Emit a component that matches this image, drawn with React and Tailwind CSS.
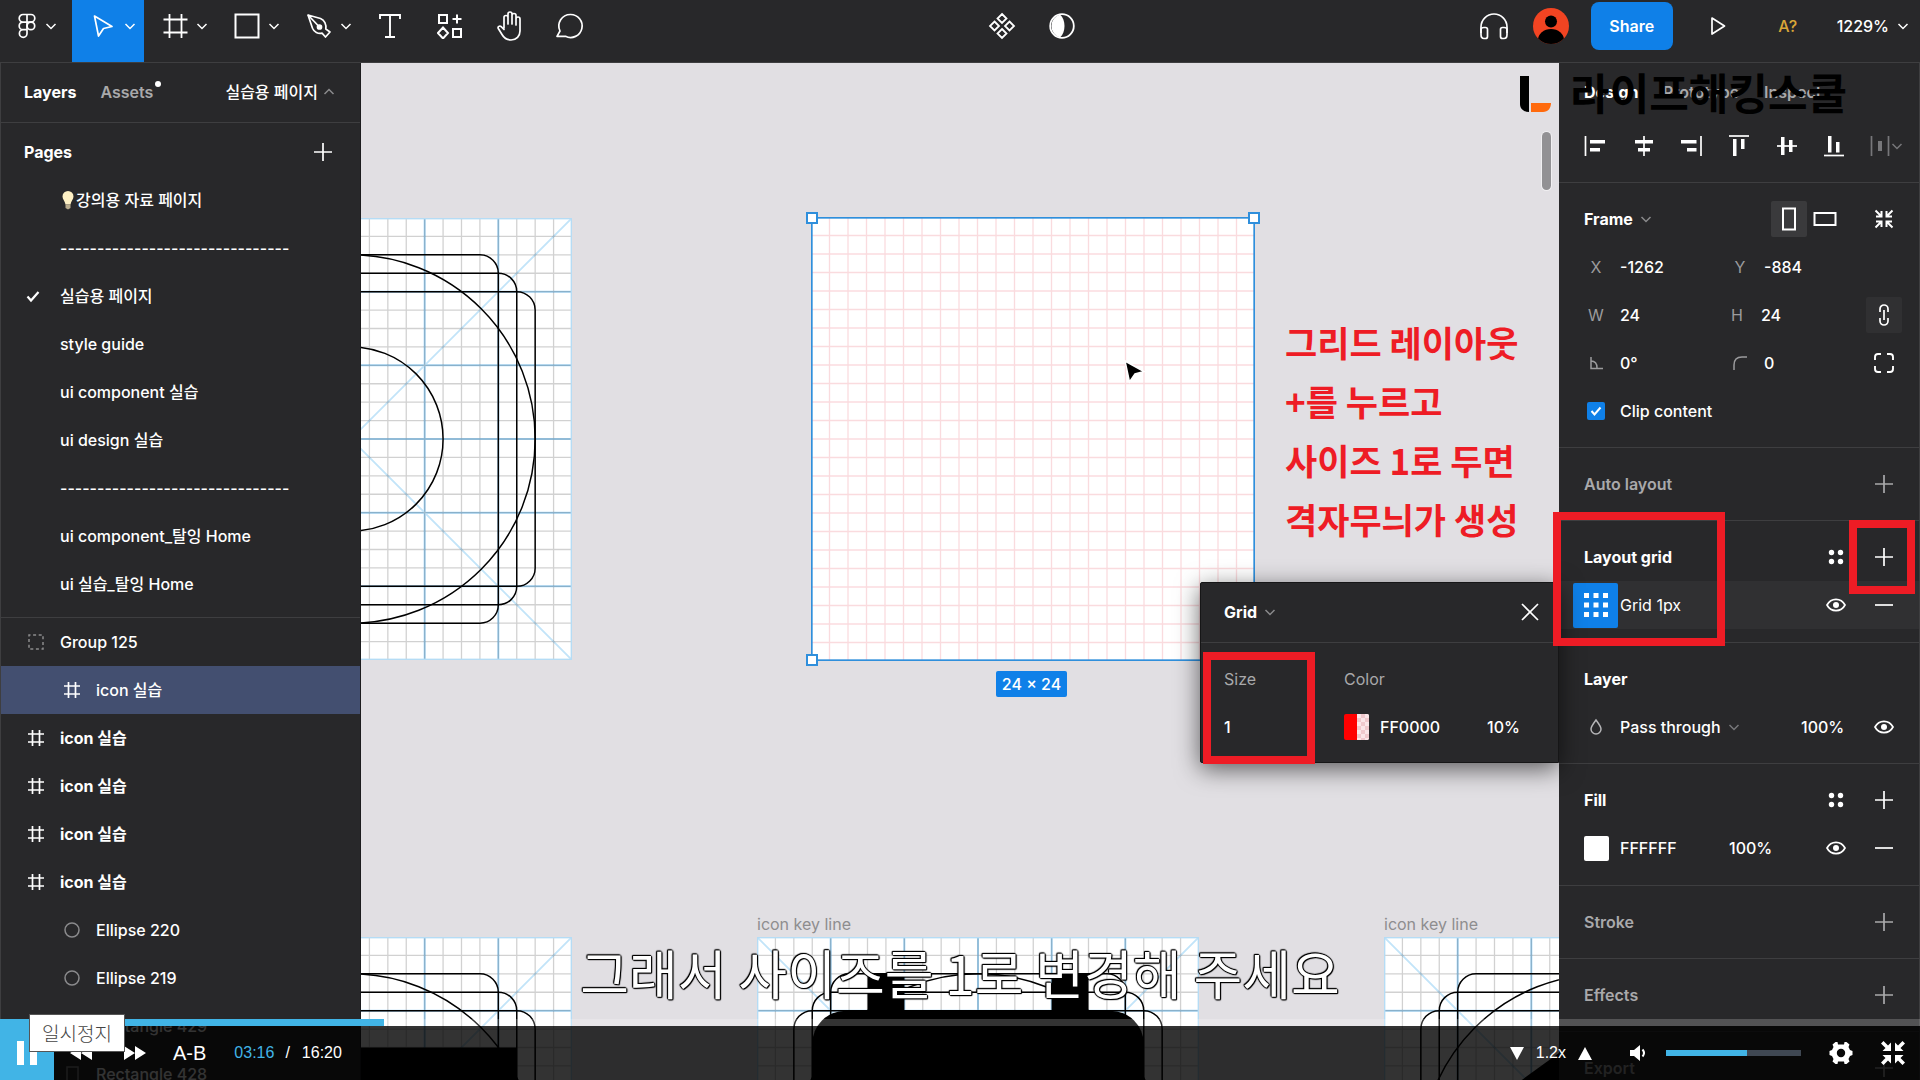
import React, { useState } from 'react';

const FONT = "font-['Inter','Noto_Sans_CJK_KR',sans-serif]";

/* ---------- icons ---------- */

const Chevron = ({ className = 'text-white', up = false }) => (
  <svg className={`w-[14px] h-[14px] shrink-0 ${className}`} viewBox="0 0 14 14" fill="none" stroke="currentColor" strokeWidth="1.5">
    <path d={up ? 'M2.500 9L7 4.500L11.500 9' : 'M2.500 5L7 9.500L11.500 5'} />
  </svg>
);

const Svg = ({ w = 26, h = 26, sw = 1.7, className = '', children }) => (
  <svg width={w} height={h} viewBox={`0 0 ${w} ${h}`} fill="none" stroke="currentColor" strokeWidth={sw} className={`shrink-0 ${className}`}>
    {children}
  </svg>
);

const FigmaIcon = () => (
  <Svg w={18} h={26}>
    <path d="M9 1.500H5a3.800 3.800 0 0 0 0 7.600h4zM9 1.500h4a3.800 3.800 0 0 1 0 7.600H9zM9 9.100H5a3.800 3.800 0 0 0 0 7.600h4zM9 16.700H5a3.800 3.800 0 1 0 4 3.800z" />
    <circle cx="12.900" cy="12.900" r="3.800" />
  </Svg>
);

const CursorIcon = () => (
  <Svg><path d="M4.500 3L22 13.500L13.500 15.500L8.500 23z" strokeLinejoin="round" /></Svg>
);

const FrameIcon = () => (
  <Svg sw={1.800}><path d="M7.500 1v24M19.500 1v24M1.500 6.500h24M1.500 19.500h24" /></Svg>
);

const RectIcon = () => (
  <Svg sw={2}><rect x="1.500" y="1.500" width="23" height="23" /></Svg>
);

const PenIcon = () => (
  <Svg>
    <path d="M2 2l12.500 3.500c4 1.500 6 6 5.300 10.500l4.200 3-4.500 5-3.500-3.800c-4 .8-8-1.200-9.500-5z" strokeLinejoin="round" />
    <path d="M2 2l11 11.500" />
    <circle cx="13.500" cy="14" r="2" fill="currentColor" />
  </Svg>
);

const TextIcon = () => (
  <Svg sw={1.900}><path d="M3 6V2h20v4M13 2v22M8 24h10" /></Svg>
);

const WidgetIcon = () => (
  <Svg sw={2}>
    <path d="M2 2h8v8H2zM16 16h8v8h-8zM20 1.500v9M15.500 6h9M6 14.500l5 5.500-5 5.500L1 20z" />
  </Svg>
);

const HandIcon = () => (
  <Svg w={30} h={32}>
    <path d="M9 18V7.500a2 2 0 0 1 4 0V14M13 14V4a2 2 0 0 1 4 0v10M17 14V5.500a2 2 0 0 1 4 0V15M21 15V9a2 2 0 0 1 4 0v12c0 5-3.500 9-9 9-4.500 0-7-2-9-5.500L3.300 18.500c-.9-1.800 1.400-3.300 2.900-1.800L9 19.500" strokeLinecap="round" />
  </Svg>
);

const CommentIcon = () => (
  <Svg w={28} h={28}><path d="M14.500 2.500a11.500 11.500 0 1 1-5 21.800H1l3-5.300A11.500 11.500 0 0 1 14.500 2.500z" strokeLinejoin="round" /></Svg>
);

const ComponentIcon = () => (
  <Svg w={28} h={28} sw={1.800}>
    <path d="M14 2l4.500 4.500L14 11 9.500 6.500zM14 17l4.500 4.500L14 26l-4.500-4.500zM6.500 9.500L11 14l-4.500 4.500L2 14zM21.500 9.500L26 14l-4.500 4.500L17 14z" />
  </Svg>
);

const MaskIcon = () => (
  <Svg w={28} h={28} sw={1.800}>
    <circle cx="14" cy="14" r="11.800" />
    <path d="M12 2.500c6 5 6 18 0 23a12 12 0 0 1 0-23z" fill="currentColor" stroke="none" />
  </Svg>
);

const HeadphonesIcon = () => (
  <Svg w={30} h={28}>
    <path d="M2 21V15a13 13 0 0 1 26 0v6" />
    <path d="M2 17.500q0-2 3-2h1.500q2 0 2 2v7q0 2-2 2H5q-3 0-3-4zM28 17.500q0-2-3-2h-1.500q-2 0-2 2v7q0 2 2 2H25q3 0 3-4z" />
  </Svg>
);

const HashIcon = () => (
  <Svg w={18} h={18} sw={1.700}><path d="M5.500 1v16M12.500 1v16M1 5h16M1 13h16" /></Svg>
);

const EllipseIcon = () => (
  <Svg w={18} h={18} sw={1.500} className="text-[#8a8a8c]"><circle cx="9" cy="9" r="7" /></Svg>
);

const GroupIcon = () => (
  <Svg w={18} h={18} sw={1.500} className="text-[#8a8a8c]"><rect x="2" y="2" width="14" height="14" strokeDasharray="3 2.600" strokeDashoffset="1.500" /></Svg>
);

const RectLayerIcon = () => (
  <Svg w={18} h={18} sw={1.500} className="text-[#8a8a8c]"><rect x="4" y="2" width="11" height="14" /></Svg>
);

const PlusIcon = () => (
  <Svg w={18} h={18} sw={1.700}><path d="M9 0v18M0 9h18" /></Svg>
);

const MinusIcon = () => (
  <Svg w={18} h={18} sw={1.700}><path d="M0 9h18" /></Svg>
);

const DotsIcon = () => (
  <svg width="18" height="18" viewBox="0 0 18 18" fill="currentColor" className="shrink-0">
    <circle cx="4.500" cy="4.500" r="2.700" /><circle cx="13.500" cy="4.500" r="2.700" />
    <circle cx="4.500" cy="13.500" r="2.700" /><circle cx="13.500" cy="13.500" r="2.700" />
  </svg>
);

const EyeIcon = () => (
  <Svg w={20} h={18}>
    <path d="M1 9c4-7.500 14-7.500 18 0-4 7.500-14 7.500-18 0z" />
    <circle cx="10" cy="9" r="3" fill="currentColor" stroke="none" />
  </Svg>
);

const ALIGN_ICONS = [
  { label: 'Align left', d: 'M1.500 2v20', bars: 'M6 6h15v3.500H6zM6 14h10v3.500H6z' },
  { label: 'Align horizontal centers', d: 'M12 2v20', bars: 'M3 6h18v3.500H3zM6 14h12v3.500H6z' },
  { label: 'Align right', d: 'M22 2v20', bars: 'M2 6h15.500v3.500H2zM8 14h9.500v3.500H8z' },
  { label: 'Align top', d: 'M2 2h20', bars: 'M6 5h3.500v17H6zM14 5h3.500v10H14z' },
  { label: 'Align vertical centers', d: 'M2 12h20', bars: 'M6 3h3.500v18H6zM14 6h3.500v12H14z' },
  { label: 'Align bottom', d: 'M2 21.500h20', bars: 'M6 2h3.500v16.500H6zM14 8h3.500v10.500H14z' },
];

/* ---------- toolbar ---------- */

const TOOLS = [
  { label: 'Move', icon: CursorIcon, menu: true, active: true },
  { label: 'Frame', icon: FrameIcon, menu: true },
  { label: 'Rectangle', icon: RectIcon, menu: true },
  { label: 'Pen', icon: PenIcon, menu: true },
  { label: 'Text', icon: TextIcon },
  { label: 'Resources', icon: WidgetIcon },
  { label: 'Hand', icon: HandIcon },
  { label: 'Comment', icon: CommentIcon },
];

const Toolbar = () => (
  <header className="flex h-[63px] shrink-0 border-b border-[#3e3e40] text-white">
    <button aria-label="Main menu" className="flex items-center gap-2 w-[72px] pl-[18px] pb-[10px]">
      <FigmaIcon />
      <Chevron />
    </button>
    {TOOLS.map(({ label, icon: Icon, menu, active }) => (
      <button
        key={label}
        aria-label={label}
        className={`flex items-center pb-[10px] ${menu ? 'w-[72px] pl-[18px] gap-[7px]' : 'w-[60px] justify-center'} ${active ? 'bg-[#0f80e8]' : ''}`}
      >
        <Icon />
        {menu && <Chevron />}
      </button>
    ))}
    <div className="flex flex-1 justify-center">
      <button aria-label="Component" className="flex items-center justify-center w-[60px] pb-[10px]"><ComponentIcon /></button>
      <button aria-label="Mask" className="flex items-center justify-center w-[60px] pb-[10px]"><MaskIcon /></button>
    </div>
    <div className="flex items-center pb-[10px]">
      <button aria-label="Audio" className="flex justify-center w-[60px]"><HeadphonesIcon /></button>
      <svg className="w-9 h-9 ml-[9px]" viewBox="0 0 36 36">
        <clipPath id="avatar"><circle cx="18" cy="18" r="18" /></clipPath>
        <g clipPath="url(#avatar)">
          <rect width="36" height="36" fill="#f24422" />
          <circle cx="18" cy="13.500" r="6" />
          <ellipse cx="18" cy="32" rx="13" ry="11" />
        </g>
      </svg>
      <button className="w-[82px] h-12 ml-[22px] rounded-lg bg-[#0f80e8] font-semibold">Share</button>
      <button aria-label="Present" className="flex justify-center w-[60px] ml-[15px]">
        <Svg w={18} h={20}><path d="M3 2l12.500 8L3 18z" strokeLinejoin="round" /></Svg>
      </button>
      <button className="w-[60px] ml-[10px] font-medium text-[#d9a638]">A?</button>
      <button className="flex items-center gap-[7px] pl-[19px] pr-[10px] font-medium">1229% <Chevron /></button>
    </div>
  </header>
);

/* ---------- left panel ---------- */

const PAGES = [
  '강의용 자료 페이지',
  '-------------------------------',
  '실습용 페이지',
  'style guide',
  'ui component 실습',
  'ui design 실습',
  '-------------------------------',
  'ui component_탈잉 Home',
  'ui 실습_탈잉 Home',
];

const LAYERS = [
  { name: 'Group 125', icon: GroupIcon },
  { name: 'icon 실습', icon: HashIcon, nested: true, selected: true },
  { name: 'icon 실습', icon: HashIcon, bold: true },
  { name: 'icon 실습', icon: HashIcon, bold: true },
  { name: 'icon 실습', icon: HashIcon, bold: true },
  { name: 'icon 실습', icon: HashIcon, bold: true },
  { name: 'Ellipse 220', icon: EllipseIcon, nested: true },
  { name: 'Ellipse 219', icon: EllipseIcon, nested: true },
  { name: 'Rectangle 429', icon: RectLayerIcon, nested: true },
  { name: 'Rectangle 428', icon: RectLayerIcon, nested: true },
];

const BulbIcon = () => (
  <svg width="16" height="20" viewBox="0 0 16 20" className="shrink-0">
    <path d="M8 1a5.500 5.500 0 0 1 5.500 5.500c0 3-2.500 4.500-3 8h-5c-.5-3.500-3-5-3-8A5.500 5.500 0 0 1 8 1z" fill="#fdf0c4" />
    <path d="M5.500 14.500h5V18L8 19.500 5.500 18z" fill="#b9ac8d" />
  </svg>
);

const LeftPanel = () => (
  <aside className="w-[361px] shrink-0 border-l border-r border-l-[#3e3e40] border-r-[#1c1c1e] text-white">
    <div className="flex items-center h-[60px] pl-[23px] pr-6 pb-[2px] border-b border-[#3e3e40]">
      <button className="font-bold">Layers</button>
      <button className="flex ml-6 font-semibold text-[#a9a9ab]">
        Assets
        <span className="w-[6px] h-[6px] mt-px ml-[2px] rounded-full bg-white" />
      </button>
      <button className="flex items-center gap-1 ml-auto font-medium">
        실습용 페이지 <Chevron up className="text-[#8a8a8c]" />
      </button>
    </div>
    <section className="pt-[5px] pb-[9px] border-b border-[#3e3e40] font-medium">
      <div className="flex items-center justify-between h-12 pl-[23px] pr-7">
        <h2 className="font-bold">Pages</h2>
        <button aria-label="Add page"><PlusIcon /></button>
      </div>
      <ul>
        {PAGES.map((page, i) => (
          <li key={i} className="flex items-center h-12 whitespace-nowrap">
            <span className="flex justify-center w-[59px] pl-1 shrink-0">
              {i === 2 && <Svg w={14} h={14} sw={2.200}><path d="M1.500 7.500l3.500 4L12.500 3" /></Svg>}
            </span>
            {i === 0 && <BulbIcon />}
            {page}
          </li>
        ))}
      </ul>
    </section>
    <ul className="font-medium">
      {LAYERS.map(({ name, icon: Icon, nested, selected, bold }, i) => (
        <li
          key={i}
          className={`flex items-center gap-[15px] h-12 whitespace-nowrap ${nested ? 'pl-[62px]' : 'pl-[26px]'} ${selected ? 'bg-[#434f70]' : ''} ${bold ? 'font-bold' : ''}`}
        >
          <Icon />
          {name}
        </li>
      ))}
    </ul>
  </aside>
);

/* ---------- canvas ---------- */

const CELLS = Array.from({ length: 23 }, (_, i) => i + 1);
const LINES = CELLS.map((n) => `M${n} 0V24M0 ${n}H24`).join('');

const KeylineFrame = ({ className, children }) => (
  <svg className={`absolute w-[442px] h-[442px] ${className}`} viewBox="0 0 24 24" fill="none">
    <rect width="24" height="24" fill="#fff" />
    <path d="M4 0V24M8 0V24M12 0V24M16 0V24M20 0V24M0 4H24M0 8H24M0 12H24M0 16H24M0 20H24" stroke="#a8d8f8" strokeWidth=".11" />
    <path d="M0 0L24 24M24 0L0 24" stroke="#c2e4f9" strokeWidth=".1" />
    <path d={LINES} stroke="#000" strokeOpacity=".18" strokeWidth=".07" />
    <rect width="24" height="24" stroke="#b5dcf5" strokeWidth=".15" />
    <g stroke="#000" strokeWidth=".08">
      <circle cx="12" cy="12" r="10" />
      <circle cx="12" cy="12" r="5" />
      <rect x="4" y="2" width="16" height="20" rx="1" />
      <rect x="3" y="3" width="18" height="18" rx="1" />
      <rect x="2" y="4" width="20" height="16" rx="1" />
    </g>
    {children}
  </svg>
);

const Handle = ({ className }) => (
  <span className={`absolute w-3 h-3 border-2 border-[#2f8fdc] bg-white ${className}`} />
);

const Canvas = () => (
  <main className="relative flex-1 min-w-0 overflow-hidden bg-[#e1dfe3]">
    <KeylineFrame className="left-[-231px] top-[155px]" />
    <KeylineFrame className="left-[-231px] top-[874px]">
      <path d="M3 6H21V19H3z" fill="#000" />
    </KeylineFrame>
    <span className="absolute left-[396px] top-[849px] text-[#8e8d8f]">icon key line</span>
    <KeylineFrame className="left-[396px] top-[874px]">
      <rect x="3" y="4" width="18" height="17" rx="1.800" fill="#000" />
      <path d="M6 2h2v3H6zM16 2h2v3h-2z" fill="#000" />
    </KeylineFrame>
    <span className="absolute left-[1023px] top-[849px] text-[#8e8d8f]">icon key line</span>
    <KeylineFrame className="left-[1023px] top-[874px]">
      <path d="M12 4.500L21 11V21H3V11z" fill="#000" />
    </KeylineFrame>

    {/* selected frame with the 1px layout grid */}
    <div className="absolute left-[450px] top-[154px] w-[444px] h-[444px]">
      <svg className="w-full h-full" viewBox="0 0 24 24">
        <rect width="24" height="24" fill="#fff" />
        <path d={LINES} stroke="#e02030" strokeOpacity=".16" strokeWidth=".07" />
        <rect x=".04" y=".04" width="23.920" height="23.920" fill="none" stroke="#2f8fdc" strokeWidth=".1" />
      </svg>
      <Handle className="-left-[5px] -top-[5px]" />
      <Handle className="-right-[5px] -top-[5px]" />
      <Handle className="-left-[5px] -bottom-[5px]" />
      <Handle className="-right-[5px] -bottom-[5px]" />
      <span className="absolute left-[185px] top-[454px] w-[71px] h-[26px] rounded-xs bg-[#0f80e8] text-white font-medium text-center leading-[26px]">
        24 × 24
      </span>
    </div>

    <svg className="absolute left-[762px] top-[296px]" width="24" height="26" viewBox="0 0 24 26">
      <path d="M2 2L21 12.500 12 15 6.500 23z" fill="#000" stroke="#fff" strokeWidth="1.500" />
    </svg>

    <p className="absolute right-[38px] top-[249px] w-[236px] font-bold text-[35px] leading-[59px] text-[#ee1c25] whitespace-pre font-['Noto_Sans_CJK_KR',sans-serif]">
      {'그리드 레이아웃\n+를 누르고\n사이즈 1로 두면\n격자무늬가 생성'}
    </p>

    <span className="absolute right-2 top-[69px] w-[9px] h-[58px] rounded-full bg-[#929194] ring-1 ring-white/50" />
  </main>
);

/* ---------- right panel ---------- */

const Mark = ({ className }) => (
  <span className={`absolute border-8 border-[#ee1c25] pointer-events-none ${className}`} />
);

const Section = ({ className = 'pb-3', children }) => (
  <section className={`pt-3 border-b border-[#3e3e40] ${className}`}>{children}</section>
);

const Row = ({ className = '', children }) => (
  <div className={`flex items-center h-12 pl-[25px] pr-[26px] ${className}`}>{children}</div>
);

const EmptySection = ({ title }) => (
  <Section>
    <Row className="justify-between text-[#a9a9ab]">
      <h2 className="font-semibold">{title}</h2>
      <button aria-label={`Add ${title}`}><PlusIcon /></button>
    </Row>
  </Section>
);

const Field = ({ id, label, title, value }) => (
  <div className="flex items-center w-36">
    <label htmlFor={id} aria-label={title} className="flex justify-center w-6 mr-3 text-[#9b9b9d]">{label}</label>
    <input id={id} defaultValue={value} className="w-20 bg-transparent font-medium outline-none" />
  </div>
);

const GridPopover = () => (
  <div className="absolute right-full top-[61px] z-10 w-[359px] h-[181px] rounded-l-xs border border-[#161617] bg-[#28282a] shadow-[0_6px_24px_rgba(0,0,0,0.6)]">
    <div className="flex items-center h-[60px] pl-[23px] pr-[19px] pb-[2px] border-b border-[#3e3e40]">
      <button className="flex items-center gap-[6px] font-bold">Grid <Chevron className="text-[#8a8a8c]" /></button>
      <button aria-label="Close" className="ml-auto">
        <Svg w={18} h={18}><path d="M1 1l16 16M17 1L1 17" /></Svg>
      </button>
    </div>
    <div className="grid grid-cols-[120px_1fr] pt-3 pl-[23px] pr-5">
      <label htmlFor="grid-size" className="h-12 leading-[48px] text-[#a9a9ab]">Size</label>
      <label htmlFor="grid-color" className="h-12 leading-[48px] text-[#a9a9ab]">Color</label>
      <input id="grid-size" defaultValue="1" className="w-20 h-12 bg-transparent font-medium outline-none" />
      <div className="flex items-center h-12">
        <span className="flex w-[25px] h-[26px] mr-[11px] rounded-xs overflow-hidden">
          <span className="flex-1 bg-[#ff0000]" />
          <span className="flex-1 bg-[#fbe0e2] bg-[repeating-conic-gradient(#f0c9cd_0_25%,#fbe6e8_0_50%)] bg-[length:8px_8px]" />
        </span>
        <input id="grid-color" defaultValue="FF0000" className="w-[107px] bg-transparent font-medium outline-none" />
        <input aria-label="Grid opacity" defaultValue="10%" className="w-12 bg-transparent font-medium outline-none" />
      </div>
    </div>
    <Mark className="left-[2px] top-[69px] w-[112px] h-[112px]" />
  </div>
);

const RightPanel = () => {
  const [clip, setClip] = useState(true);

  return (
    <aside className="w-[361px] shrink-0 border-r border-[#3e3e40] text-white">
      <nav className="flex items-center h-[59px] pl-[25px] pb-[2px] font-semibold text-[#a9a9ab]">
        <button className="w-[79px] text-left font-bold text-white">Design</button>
        <button className="w-[101px] text-left">Prototype</button>
        <button>Inspect</button>
      </nav>
      <div className="flex items-center justify-between h-[61px] pl-[25px] pr-[15px] pb-3 border-b border-[#3e3e40]">
        {ALIGN_ICONS.map(({ label, d, bars }) => (
          <button key={label} aria-label={label}>
            <Svg w={24} h={24}><path d={d} /><path d={bars} fill="currentColor" stroke="none" /></Svg>
          </button>
        ))}
        <button aria-label="Distribute" className="flex items-center text-[#77777a]">
          <Svg w={20} h={24}><path d="M1.500 2v20M18.500 2v20" /><path d="M8 7h4v10H8z" fill="currentColor" stroke="none" /></Svg>
          <Chevron className="" />
        </button>
      </div>

      <Section>
        <Row>
          <button className="flex items-center gap-[6px] font-bold">Frame <Chevron className="text-[#8a8a8c]" /></button>
          <button aria-label="Portrait" className="flex items-center justify-center w-9 h-9 ml-auto rounded-xs bg-[#3a3a3c]">
            <Svg w={14} h={24} sw={2}><rect x="1" y="1.500" width="12" height="21" /></Svg>
          </button>
          <button aria-label="Landscape" className="flex justify-center w-9">
            <Svg w={24} h={14} sw={2}><rect x="1.500" y="1" width="21" height="12" /></Svg>
          </button>
          <button aria-label="Resize to fit" className="-mr-px ml-[31px]">
            <Svg w={20} h={20} sw={2}>
              <path d="M7.500 2v5.500H2M12.500 2v5.500H18M7.500 18v-5.500H2M12.500 18v-5.500H18M1.500 1.500l5.500 5.500M18.500 1.500l-5.500 5.500M1.500 18.500l5.500-5.500M18.500 18.500l-5.500-5.500" />
            </Svg>
          </button>
        </Row>
        <Row>
          <Field id="x" label="X" value="-1262" />
          <Field id="y" label="Y" value="-884" />
        </Row>
        <Row>
          <Field id="w" label="W" value="24" />
          <Field id="h" label="H" value="24" />
          <button aria-label="Constrain proportions" className="flex items-center justify-center w-9 h-9 ml-auto -mr-[9px] shrink-0 rounded-xs bg-[#303032]">
            <Svg w={12} h={24}><path d="M2 9V6a4 4 0 0 1 8 0v3M2 15v3a4 4 0 0 0 8 0v-3M6 7v10" /></Svg>
          </button>
        </Row>
        <Row>
          <Field id="rotation" title="Rotation" value="0°" label={<Svg w={14} h={14} sw={1.500}><path d="M2 1v11.500h12M2 5c4 0 6 3 6 7" /></Svg>} />
          <Field id="radius" title="Corner radius" value="0" label={<Svg w={14} h={14} sw={1.500}><path d="M1 14V9c0-5 3-8 8-8h5" /></Svg>} />
          <button aria-label="Independent corners" className="-mr-px ml-auto">
            <Svg w={20} h={20} sw={1.900}><path d="M1 7V4q0-3 3-3h3M13 1h3q3 0 3 3v3M19 13v3q0 3-3 3h-3M7 19H4q-3 0-3-3v-3" /></Svg>
          </button>
        </Row>
        <Row>
          <label className="relative flex items-center gap-[15px] pl-[3px] font-medium">
            <input
              type="checkbox"
              checked={clip}
              onChange={(e) => setClip(e.target.checked)}
              className="appearance-none w-[18px] h-[18px] rounded-xs bg-[#3a3a3c] checked:bg-[#0f80e8]"
            />
            {clip && (
              <svg className="absolute left-[6px] w-3 h-3 pointer-events-none" viewBox="0 0 12 12" fill="none" stroke="#fff" strokeWidth="2">
                <path d="M1.500 6l3 3.500L10.500 2.500" />
              </svg>
            )}
            Clip content
          </label>
        </Row>
      </Section>

      <EmptySection title="Auto layout" />

      <Section className="relative pb-[13px]">
        <Row>
          <h2 className="font-bold">Layout grid</h2>
          <button aria-label="Grid styles" className="ml-auto"><DotsIcon /></button>
          <button aria-label="Add layout grid" className="ml-[30px]"><PlusIcon /></button>
        </Row>
        <div className="flex items-center h-12 pl-[14px] pr-[26px] bg-[#303032]">
          <button aria-label="Grid settings" className="flex items-center justify-center w-[45px] h-[45px] rounded-xs bg-[#0f80e8]">
            <svg width="24" height="24" viewBox="0 0 24 24" fill="#fff">
              <path d="M0 0h5v5H0zM9.500 0h5v5h-5zM19 0h5v5h-5zM0 9.500h5v5H0zM9.500 9.500h5v5h-5zM19 9.500h5v5h-5zM0 19h5v5H0zM9.500 19h5v5h-5zM19 19h5v5h-5z" />
            </svg>
          </button>
          <span className="ml-[2px]">Grid 1px</span>
          <button aria-label="Hide grid" className="ml-auto"><EyeIcon /></button>
          <button aria-label="Remove grid" className="ml-[29px]"><MinusIcon /></button>
        </div>
        <GridPopover />
        <Mark className="z-20 -left-[6px] -top-[9px] w-[172px] h-[134px]" />
        <Mark className="z-20 right-1 -top-px w-[66px] h-[74px]" />
      </Section>

      <Section>
        <Row><h2 className="font-bold">Layer</h2></Row>
        <Row>
          <Svg w={24} h={18} sw={1.500} className="mr-3 text-[#b5b5b7]"><path d="M12 2c3 4 5 6.500 5 9a5 5 0 0 1-10 0c0-2.500 2-5 5-9z" /></Svg>
          <button className="flex items-center gap-[6px] font-medium">Pass through <Chevron className="text-[#77777a]" /></button>
          <input aria-label="Layer opacity" defaultValue="100%" className="w-12 ml-auto bg-transparent font-medium outline-none" />
          <button aria-label="Hide layer" className="-mr-px ml-[25px]"><EyeIcon /></button>
        </Row>
      </Section>

      <Section className="pb-[13px]">
        <Row>
          <h2 className="font-bold">Fill</h2>
          <button aria-label="Fill styles" className="ml-auto"><DotsIcon /></button>
          <button aria-label="Add fill" className="ml-[30px]"><PlusIcon /></button>
        </Row>
        <Row>
          <span className="w-[25px] h-[25px] mr-[11px] rounded-xs bg-white" />
          <input aria-label="Fill color" defaultValue="FFFFFF" className="w-[109px] bg-transparent font-medium outline-none" />
          <input aria-label="Fill opacity" defaultValue="100%" className="w-12 bg-transparent font-medium outline-none" />
          <button aria-label="Hide fill" className="ml-auto"><EyeIcon /></button>
          <button aria-label="Remove fill" className="ml-[29px]"><MinusIcon /></button>
        </Row>
      </Section>

      <EmptySection title="Stroke" />
      <EmptySection title="Effects" />
      <EmptySection title="Export" />
    </aside>
  );
};

/* ---------- lecture player overlay ---------- */

const Brand = () => (
  <div className="absolute right-[73px] top-[64px] flex items-center gap-[18px] pointer-events-none">
    <svg width="32" height="36" viewBox="0 0 32 36">
      <path d="M0 0h9v36c-5 0-9-3-9-8z" />
      <path d="M11 27h20c0 5-3 9-8 9H11z" fill="#ff6a0d" />
    </svg>
    <span className="font-bold text-[43px] leading-[60px] text-black">라이프해킹스쿨</span>
  </div>
);

const THUMBLESS = 'appearance-none outline-none [&::-webkit-slider-thumb]:appearance-none [&::-webkit-slider-thumb]:w-0';

const fillTo = (value, color, rest) => ({
  background: `linear-gradient(to right, ${color} ${value}%, ${rest} ${value}%)`,
});

const Player = () => {
  const [progress, setProgress] = useState(20);
  const [volume, setVolume] = useState(60);

  return (
    <footer className="absolute inset-x-0 bottom-0 z-30 text-white font-['Liberation_Sans','Noto_Sans_CJK_KR',sans-serif]">
      <input
        type="range"
        aria-label="Seek"
        value={progress}
        onChange={(e) => setProgress(Number(e.target.value))}
        style={fillTo(progress, '#41b4e6', 'rgba(255,255,255,0.2)')}
        className={`block w-full h-[7px] ${THUMBLESS}`}
      />
      <div className="flex items-center h-[54px] bg-black/80">
        <button aria-label="일시정지" className="flex items-center justify-center w-[54px] h-full bg-[#41b4e6]">
          <svg width="20" height="24" viewBox="0 0 20 24" fill="#fff"><path d="M0 0h7v24H0zM13 0h7v24h-7z" /></svg>
        </button>
        <button aria-label="Rewind" className="ml-4">
          <svg width="22" height="14" viewBox="0 0 22 14" fill="#fff"><path d="M11 0v14L0 7zM22 0v14L11 7z" /></svg>
        </button>
        <button aria-label="Fast forward" className="ml-8">
          <svg width="22" height="14" viewBox="0 0 22 14" fill="#fff"><path d="M0 0l11 7L0 14zM11 0l11 7-11 7z" /></svg>
        </button>
        <button className="ml-[27px] text-xl">A-B</button>
        <span className="ml-7 text-[#41b4e6]">03:16</span>
        <span className="ml-[11px]">/</span>
        <span className="ml-3">16:20</span>

        <button aria-label="Slower" className="ml-auto">
          <svg width="14" height="13" viewBox="0 0 14 13" fill="#fff"><path d="M0 0h14L7 13z" /></svg>
        </button>
        <span className="ml-3">1.2x</span>
        <button aria-label="Faster" className="ml-3">
          <svg width="14" height="13" viewBox="0 0 14 13" fill="#fff"><path d="M0 13h14L7 0z" /></svg>
        </button>
        <button aria-label="Mute" className="ml-[38px]">
          <svg width="18" height="18" viewBox="0 0 18 18" fill="#fff">
            <path d="M0 6h4l6-5v16l-6-5H0z" />
            <path d="M12.500 5.500q3 3.500 0 7" fill="none" stroke="#fff" strokeWidth="2" />
          </svg>
        </button>
        <input
          type="range"
          aria-label="Volume"
          value={volume}
          onChange={(e) => setVolume(Number(e.target.value))}
          style={fillTo(volume, '#41b4e6', '#3f4752')}
          className={`w-[135px] h-[6px] ml-[18px] ${THUMBLESS}`}
        />
        <button aria-label="Settings" className="ml-7">
          <svg width="24" height="24" viewBox="0 0 24 24" fill="#fff" fillRule="evenodd">
            <path d="M9 3.500L8.500 1h-2L3.500 3.500 4.500 6 3 9 .500 10v4L3 15l1.500 3-1 2.500L6.500 23h2L9 20.500h6l.5 2.500h2l3-2.500-1-2.500 1.500-3 2.500-1v-4L21 9l-1.500-3 1-2.500L17.500 1h-2L15 3.500zM12 7.800a4.200 4.200 0 1 0 0 8.400 4.200 4.200 0 0 0 0-8.400z" />
          </svg>
        </button>
        <button aria-label="Exit full screen" className="ml-7 mr-[15px]">
          <svg width="24" height="24" viewBox="0 0 24 24" fill="#fff">
            <path d="M10 1.500v8.500H1.500l3-3L0 2.500 2.500 0 7 4.500zM14 1.500v8.500h8.500l-3-3L24 2.500 21.500 0 17 4.500zM10 22.500V14H1.500l3 3L0 21.500 2.500 24 7 19.500zM14 22.500V14h8.500l-3 3 4.500 4.500-2.500 2.500-4.500-4.500z" />
          </svg>
        </button>
      </div>
      <span className="absolute left-[29px] bottom-[28px] w-24 h-[38px] border border-[#555] bg-white text-center text-[19px] leading-[36px] text-[#444] font-light font-['Noto_Sans_CJK_KR',sans-serif]">
        일시정지
      </span>
    </footer>
  );
};

const App = () => (
  <div className={`relative flex flex-col h-screen overflow-hidden bg-[#28282a] text-base ${FONT}`}>
    <Toolbar />
    <div className="flex flex-1 min-h-0">
      <LeftPanel />
      <Canvas />
      <RightPanel />
    </div>
    <Brand />
    <p className="absolute inset-x-0 bottom-[68px] z-20 text-center text-[53px] leading-[80px] font-normal text-white pointer-events-none font-['Noto_Sans_CJK_KR',sans-serif] [text-shadow:1px_0_1px_#000,-1px_0_1px_#000,0_1px_1px_#000,0_-1px_1px_#000,1px_1px_1px_#000,-1px_-1px_1px_#000]">
      그래서 사이즈를 1로 변경해 주세요
    </p>
    <Player />
  </div>
);

export default App;
